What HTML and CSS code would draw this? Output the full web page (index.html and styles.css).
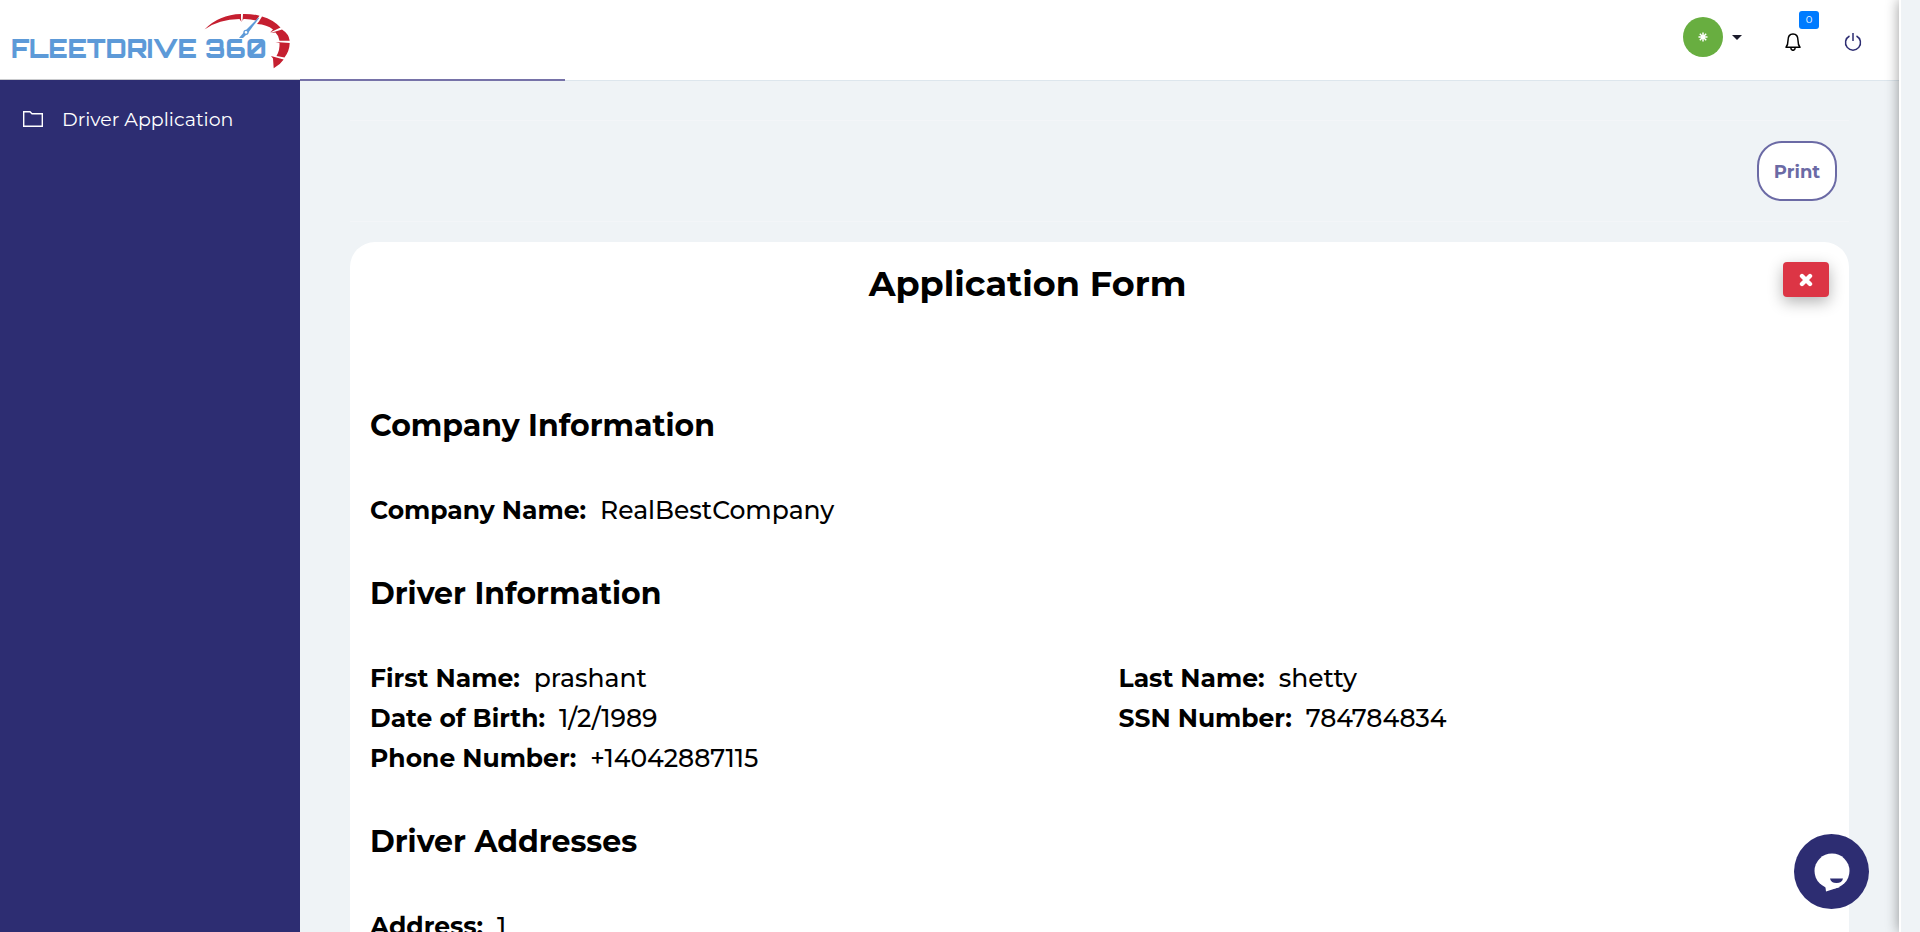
FILE: index.html
```
<!DOCTYPE html>
<html lang="en">
<head>
<meta charset="utf-8">
<title>FleetDrive 360 - Driver Application</title>
<link rel="stylesheet" href="styles.css">
</head>
<body>
<div class="app">
  <aside class="sidebar">
    <a class="brand" href="#" aria-label="FleetDrive 360">
      <svg class="brand-logo" viewBox="0 0 300 79" role="img" aria-label="FleetDrive 360">
        <text class="brand-text" x="11" y="58">FLEETDRIVE 360</text>
        <g fill="#c51f30">
          <path d="M204.500 29.500Q219 14.500 241 14V19L241.500 22L239.500 19Q219 19 204.500 29.500Z"/>
          <path d="M243 14Q252 13.800 259.500 15.700L256 20.500Q250 18.800 243.500 19L242.500 21Z"/>
          <path d="M262 16.500Q273 19.500 280.500 27.500L270 32.500L273 29.500Q267 24.500 257 24L259 21.500Z"/>
          <path d="M282 29.500Q289 34 289.700 40.700H279.500Q279 36 275.500 32.500L270.500 33Z"/>
          <path d="M289.700 43Q289.500 51 284.500 57.500L276.500 56Q280 50 279.500 43L275.500 42Z"/>
          <path d="M271 56L283.700 59.500Q280 65 273.700 68.300L273 58.500Z"/>
        </g>
        <path fill="#5d9ad8" d="M258.500 17.500L259 18.200L248 33L243 38H239L245 31Z"/>
        <circle cx="246" cy="32.300" r="2" fill="#fff" stroke="#5d9ad8" stroke-width="1.300"/>
      </svg>
    </a>
    <nav class="menu">
      <a class="menu-item" href="#">
        <svg class="menu-icon" viewBox="0 0 20 16" aria-hidden="true"><path d="M.7 15.300V.7H7l2 2h10.300v12.600Z" fill="none" stroke="currentColor" stroke-width="1.400"/></svg>
        <span>Driver Application</span>
      </a>
    </nav>
  </aside>

  <div class="page">
    <header class="topbar">
      <div class="progress"></div>
      <button class="account" type="button" aria-label="Account">
        <span class="avatar"><svg viewBox="0 0 10 10" width="10" height="10" aria-hidden="true"><path d="M5 .5V9.500M.5 5H9.500M1.800 1.800L8.200 8.200M8.200 1.800L1.800 8.200" stroke="#fff" stroke-width="1.500"/></svg></span>
        <svg class="caret" viewBox="0 0 10 5" aria-hidden="true"><path d="M0 0H10L5 5Z" fill="#1b1b2b"/></svg>
      </button>
      <button class="tool bell" type="button" aria-label="Notifications">
        <svg viewBox="0 0 16 18" width="16" height="18" aria-hidden="true"><path d="M1 14.300C3 12 3 10 3 7.500C3 3 5.200 1 8 1S13 3 13 7.500C13 10 13 12 15 14.300ZM5.700 14.500C5.900 16.600 7 17.300 8 17.300S10.100 16.600 10.300 14.500" fill="none" stroke="#000" stroke-width="1.500" stroke-linejoin="round"/></svg>
        <span class="badge">0</span>
      </button>
      <button class="tool power" type="button" aria-label="Log out">
        <svg viewBox="0 0 18 18" width="18" height="18" aria-hidden="true"><path d="M9 0V8M5.500 3A7.500 7.500 0 1 0 12.500 3" fill="none" stroke="#2d2d72" stroke-width="1.500"/></svg>
      </button>
    </header>

    <main class="content">
      <div class="actions"><button class="print" type="button">Print</button></div>
      <section class="card">
        <button class="close" type="button" aria-label="Close">
          <svg viewBox="0 0 14 14" width="14" height="14" aria-hidden="true"><path d="M3 3L11 11M11 3L3 11" stroke="#fff" stroke-width="4.400" stroke-linecap="round"/></svg>
        </button>
        <h1 class="title">Application Form</h1>

        <h2 class="heading">Company Information</h2>
        <dl class="fields">
          <div class="field"><dt>Company Name:</dt><dd>RealBestCompany</dd></div>
        </dl>

        <h2 class="heading">Driver Information</h2>
        <dl class="fields">
          <div class="field"><dt>First Name:</dt><dd>prashant</dd></div>
          <div class="field"><dt>Last Name:</dt><dd>shetty</dd></div>
          <div class="field"><dt>Date of Birth:</dt><dd>1/2/1989</dd></div>
          <div class="field"><dt>SSN Number:</dt><dd>784784834</dd></div>
          <div class="field"><dt>Phone Number:</dt><dd>+14042887115</dd></div>
        </dl>

        <h2 class="heading">Driver Addresses</h2>
        <dl class="fields">
          <div class="field"><dt>Address:</dt><dd>1</dd></div>
        </dl>
      </section>
    </main>
  </div>
  <aside class="drawer" aria-hidden="true"></aside>
</div>
<button class="chat" type="button" aria-label="Open chat">
  <svg viewBox="0 0 75 75" width="75" height="75" aria-hidden="true"><circle cx="38" cy="37" r="17.500" fill="#fff"/><path d="M31 50L32 57.500L46 53Z" fill="#fff"/><path d="M36 44.500H49Q48 49 42.500 49T36 44.500Z" fill="#2d2d72"/></svg>
</button>
</body>
</html>
```
FILE: styles.css
```
* { box-sizing: border-box; }
body {
  margin: 0;
  height: 100vh;
  overflow: hidden;
  background: #eff3f6;
  color: #000;
  font-family: Montserrat, Inter, sans-serif;
}
button { font: inherit; cursor: pointer; border: 0; padding: 0; background: none; }
a { text-decoration: none; }

.app { display: flex; height: 100vh; }
.sidebar { flex: 0 0 300px; background: #2d2d72; }
.brand { display: block; height: 80px; background: #fff; border-bottom: 1px solid #c9cacd; }
.brand-logo { display: block; width: 300px; height: 79px; }
.brand-text { font: 900 25px Orbitron, Michroma, Audiowide, "DejaVu Sans", sans-serif; fill: #5d9ad8; }
.menu { padding-top: 19px; }
.menu-item { display: flex; align-items: center; gap: 19px; height: 40px; padding-left: 23px; color: #fff; font-size: 19px; }
.menu-icon { width: 20px; height: 16px; }

.page { flex: 1; min-width: 0; }
.topbar {
  position: relative;
  display: flex;
  height: 81px;
  padding-right: 37px;
  justify-content: flex-end;
  background: #fff;
  border-bottom: 1px solid #dde6ed;
}
.progress { position: absolute; left: 0; bottom: -1px; width: 265px; height: 2px; background: #7672a8; }
.account { display: flex; align-items: center; gap: 9px; height: 40px; margin: 17px 43px 0 0; }
.avatar { display: flex; align-items: center; justify-content: center; width: 40px; height: 40px; border-radius: 50%; background: #68ae40; }
.caret { width: 10px; height: 5px; }
.tool { display: block; position: relative; height: 18px; margin-top: 33px; }
.tool svg { display: block; }
.bell { margin-right: 43px; }
.badge {
  position: absolute;
  left: 14px;
  top: -22px;
  width: 20px;
  height: 18px;
  border-radius: 3px;
  background: #007bff;
  color: #fff;
  font-size: 10px;
  line-height: 18px;
  text-align: center;
}

.content { padding: 39px 50px 0; }
.actions {
  display: flex;
  justify-content: flex-end;
  padding: 20px 12px;
  margin-bottom: 20px;
  border-top: 1px solid #f3f5f8;
  border-bottom: 1px solid #f3f5f8;
}
.print {
  width: 80px;
  height: 60px;
  padding-top: 2px;
  border: 2px solid #6b6aa5;
  border-radius: 25px;
  background: #fff;
  color: #6b6aa5;
  font-size: 18px;
  font-weight: 700;
}
.card { position: relative; padding: 20px; border-radius: 25px; background: #fff; }
.close {
  position: absolute;
  right: 20px;
  top: 20px;
  display: flex;
  align-items: center;
  justify-content: center;
  width: 46px;
  height: 35px;
  border-radius: 4px;
  background: #dc3545;
  box-shadow: 0 5px 15px rgba(0, 0, 0, .3);
}
.title {
  margin: 0 0 100px;
  padding-right: 144px;
  font-size: 35px;
  font-weight: 700;
  line-height: 44px;
  text-align: center;
}
.heading { margin: 0; font-size: 30px; font-weight: 700; line-height: 40px; }
.fields { display: grid; grid-template-columns: 1fr 1fr; column-gap: 38px; margin: 44px 0; }
.field { display: flex; gap: 14px; font-size: 25px; line-height: 40px; }
.field dt { font-weight: 700; }
.field dd { margin: 0; font-weight: 500; }

.drawer { flex: 0 0 21px; border-left: 2px solid #fff; background: #eff3f6; box-shadow: 0 0 14px rgba(0, 0, 0, .4); z-index: 1; }
.chat { position: fixed; right: 51px; bottom: 23px; width: 75px; height: 75px; border-radius: 50%; background: #2d2d72; z-index: 2; }
.chat svg { display: block; }
```
